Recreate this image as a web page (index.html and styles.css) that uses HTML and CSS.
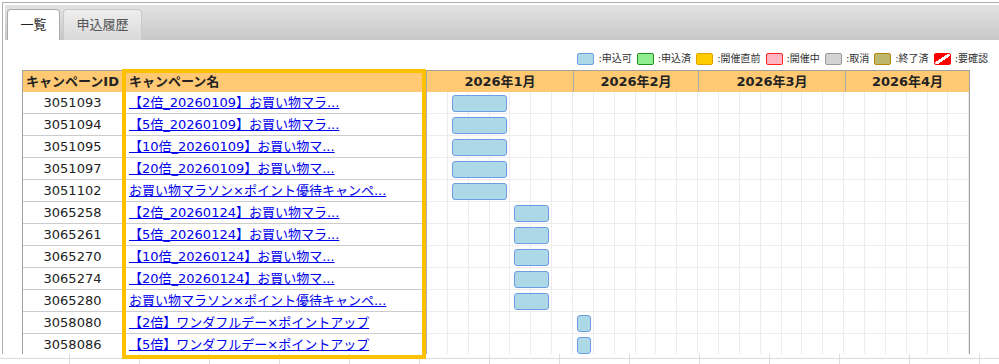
FILE: index.html
```html
<!DOCTYPE html>
<html lang="ja">
<head>
    <meta charset="UTF-8">
    <title>キャンペーン一覧</title>
    <link rel="stylesheet" href="styles.css">
</head>
<body>
<div class="page">
    <div class="frame">
        <ul class="tabs">
            <li class="tab active">一覧</li>
            <li class="tab">申込履歴</li>
        </ul>

        <div class="panel">
            <!-- status legend -->
            <div class="legend">
                <span class="legend-item"><i class="swatch s-open"></i>:申込可</span>
                <span class="legend-item"><i class="swatch s-applied"></i>:申込済</span>
                <span class="legend-item"><i class="swatch s-soon"></i>:開催直前</span>
                <span class="legend-item"><i class="swatch s-live"></i>:開催中</span>
                <span class="legend-item"><i class="swatch s-cancel"></i>:取消</span>
                <span class="legend-item"><i class="swatch s-done"></i>:終了済</span>
                <span class="legend-item"><i class="swatch s-check"></i>:要確認</span>
            </div>

            <div class="schedule">
                <div class="row head">
                    <div class="c-id">キャンペーンID</div>
                    <div class="c-name">キャンペーン名</div>
                    <div class="c-gantt months">
                        <div class="month m-jan">2026年1月</div>
                        <div class="month m-feb">2026年2月</div>
                        <div class="month m-mar">2026年3月</div>
                        <div class="month m-apr">2026年4月</div>
                    </div>
                </div>

                <div class="row line">
                    <div class="c-id">3051093</div>
                    <div class="c-name"><a href="#">【2倍_20260109】お買い物マラ...</a></div>
                    <div class="c-gantt"><span class="bar" style="left:25px;width:55px"></span></div>
                </div>
                <div class="row line">
                    <div class="c-id">3051094</div>
                    <div class="c-name"><a href="#">【5倍_20260109】お買い物マラ...</a></div>
                    <div class="c-gantt"><span class="bar" style="left:25px;width:55px"></span></div>
                </div>
                <div class="row line">
                    <div class="c-id">3051095</div>
                    <div class="c-name"><a href="#">【10倍_20260109】お買い物マ...</a></div>
                    <div class="c-gantt"><span class="bar" style="left:25px;width:55px"></span></div>
                </div>
                <div class="row line">
                    <div class="c-id">3051097</div>
                    <div class="c-name"><a href="#">【20倍_20260109】お買い物マ...</a></div>
                    <div class="c-gantt"><span class="bar" style="left:25px;width:55px"></span></div>
                </div>
                <div class="row line">
                    <div class="c-id">3051102</div>
                    <div class="c-name"><a href="#">お買い物マラソン×ポイント優待キャンペ...</a></div>
                    <div class="c-gantt"><span class="bar" style="left:25px;width:55px"></span></div>
                </div>
                <div class="row line">
                    <div class="c-id">3065258</div>
                    <div class="c-name"><a href="#">【2倍_20260124】お買い物マラ...</a></div>
                    <div class="c-gantt"><span class="bar" style="left:87px;width:35px"></span></div>
                </div>
                <div class="row line">
                    <div class="c-id">3065261</div>
                    <div class="c-name"><a href="#">【5倍_20260124】お買い物マラ...</a></div>
                    <div class="c-gantt"><span class="bar" style="left:87px;width:35px"></span></div>
                </div>
                <div class="row line">
                    <div class="c-id">3065270</div>
                    <div class="c-name"><a href="#">【10倍_20260124】お買い物マ...</a></div>
                    <div class="c-gantt"><span class="bar" style="left:87px;width:35px"></span></div>
                </div>
                <div class="row line">
                    <div class="c-id">3065274</div>
                    <div class="c-name"><a href="#">【20倍_20260124】お買い物マ...</a></div>
                    <div class="c-gantt"><span class="bar" style="left:87px;width:35px"></span></div>
                </div>
                <div class="row line">
                    <div class="c-id">3065280</div>
                    <div class="c-name"><a href="#">お買い物マラソン×ポイント優待キャンペ...</a></div>
                    <div class="c-gantt"><span class="bar" style="left:87px;width:35px"></span></div>
                </div>
                <div class="row line">
                    <div class="c-id">3058080</div>
                    <div class="c-name"><a href="#">【2倍】ワンダフルデー×ポイントアップ</a></div>
                    <div class="c-gantt"><span class="bar" style="left:150px;width:14px"></span></div>
                </div>
                <div class="row line">
                    <div class="c-id">3058086</div>
                    <div class="c-name"><a href="#">【5倍】ワンダフルデー×ポイントアップ</a></div>
                    <div class="c-gantt"><span class="bar" style="left:150px;width:14px"></span></div>
                </div>
            </div>
        </div>
    </div>
    <div class="ruler"></div>

    <!-- marker drawn over the name column -->
    <div class="highlight"></div>
</div>
</body>
</html>
```

FILE: styles.css
```css
/* General */
body {
    margin: 0;
    font-family: "DejaVu Sans", "Noto Sans CJK JP", sans-serif;
    color: #222;
    background: #fff;
}

.page {
    position: relative;
    width: 999px;
    height: 364px;
    overflow: hidden;
}

.frame {
    box-sizing: border-box;
    width: 997px;
    height: 352px;
    margin: 2px 0 0 2px;
    padding: 2px 0 0 2px;
    border-top: 1px solid #adadad;
    border-left: 1px solid #adadad;
    overflow: hidden;
}

/* Tabs */
.tabs {
    display: flex;
    gap: 3px;
    box-sizing: border-box;
    height: 35px;
    margin: 0;
    padding: 4px 0 0 2px;
    list-style: none;
    background: linear-gradient(#e3e3e3, #c8c8c8);
}

.tab {
    box-sizing: border-box;
    height: 31px;
    padding: 0 12.5px;
    border: 1px solid #cacaca;
    border-bottom: 0;
    border-radius: 4px 4px 0 0;
    font-size: 13px;
    line-height: 30px;
    color: #555;
    background: linear-gradient(#eeeeee, #d9d9d9);
}

.tab.active {
    border-color: #acacac;
    color: #222;
    background: #fff;
}

/* Legend */
.legend {
    display: flex;
    justify-content: flex-end;
    margin-top: 13px;
    padding-right: 11px;
    font-size: 10px;
    line-height: 12px;
    color: #333;
}

.legend-item {
    display: flex;
    align-items: center;
    margin-left: 5px;
}

.swatch {
    box-sizing: border-box;
    width: 17px;
    height: 12px;
    margin-right: 4px;
    border: 1px solid;
    border-radius: 2px;
}

.s-open    { background: #add8e6; border-color: #6f9fe4; }
.s-applied { background: #90ee90; border-color: #1f8f1f; }
.s-soon    { background: #ffcc00; border-color: #e0a200; }
.s-live    { background: #ffb6c1; border-color: #ff2020; }
.s-cancel  { background: #d3d3d3; border-color: #999; }
.s-done    { background: #bdb76b; border-color: #b8860b; }
.s-check {
    border-color: #ff0000;
    background: linear-gradient(to bottom right, #ff0000 42%, #fff 42%, #fff 60%, #ff0000 60%);
}

/* Schedule table */
.schedule {
    box-sizing: border-box;
    width: 948px;
    margin: 5px 0 0 17px;
    border: 1px solid #a0a0a0;
    border-bottom: 0;
}

.row {
    display: flex;
    height: 22px;
    font-size: 13px;
    line-height: 21px;
}

.head {
    height: 21px;
    font-weight: bold;
    background: #ffc973;
}

.c-id {
    box-sizing: border-box;
    flex: none;
    width: 100px;
    text-align: center;
    border-right: 1px solid #ccc;
}

.c-name {
    box-sizing: border-box;
    flex: none;
    width: 304px;
    padding-left: 6px;
    border-right: 1px solid #aaa;
    white-space: nowrap;
    overflow: hidden;
}

.c-gantt {
    position: relative;
    flex: 1;
}

.months {
    display: flex;
}

.month {
    box-sizing: border-box;
    text-align: center;
    border-right: 1px solid #aaa;
}

.m-jan { width: 147px; }
.m-feb { width: 125px; }
.m-mar { width: 147px; }
.m-apr { width: 123px; border-right: 0; }

.line .c-id,
.line .c-name {
    border-bottom: 1px solid #ccc;
}

.line .c-gantt {
    border-bottom: 1px solid #ececec;
    background: repeating-linear-gradient(to right, transparent 0, transparent 19.86px, #ececec 19.86px, #ececec 20.86px);
}

.c-name a {
    color: #0000ee;
}

.bar {
    position: absolute;
    top: 3px;
    box-sizing: border-box;
    height: 17px;
    border: 1px solid #6d9ce6;
    border-radius: 3px;
    background: #add8e6;
}

/* bottom ruler */
.ruler {
    height: 10px;
    background:
        linear-gradient(#dcdcdc, #dcdcdc) 0 4px / 100% 1px no-repeat,
        repeating-linear-gradient(to right, transparent 0, transparent 69px, #dcdcdc 69px, #dcdcdc 70px);
}

.highlight {
    position: absolute;
    left: 122px;
    top: 69px;
    box-sizing: border-box;
    width: 304px;
    height: 290px;
    border: 4px solid #ffc000;
}
```
